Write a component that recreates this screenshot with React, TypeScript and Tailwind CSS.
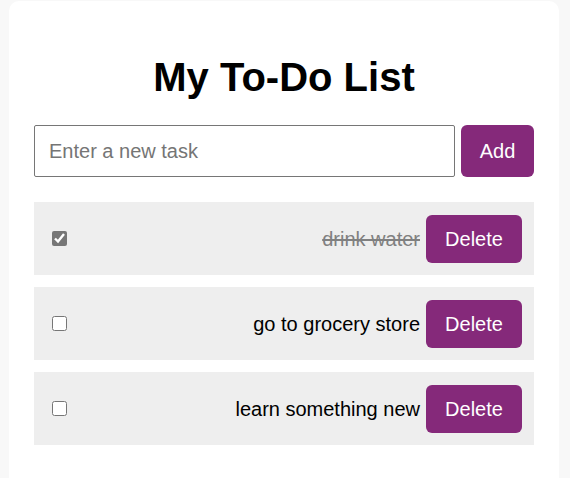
import React, { useState } from "react";

type Task = { id: number; text: string; done: boolean };

export default function App() {
  const [tasks, setTasks] = useState<Task[]>([
    { id: 1, text: "drink water", done: true },
    { id: 2, text: "go to grocery store", done: false },
    { id: 3, text: "learn something new", done: false },
  ]);
  const [value, setValue] = useState("");

  const add = () => {
    if (!value.trim()) return;
    setTasks([...tasks, { id: Date.now(), text: value.trim(), done: false }]);
    setValue("");
  };

  return (
    <div
      className="min-h-[478px] bg-[#f8f8f8] pt-[1px]"
      style={{ fontFamily: '"Liberation Sans", Arial, sans-serif' }}
    >
      <div className="ml-[9px] w-[550px] min-h-[500px] rounded-[10px] bg-white px-[25px] pt-[54px] pb-[25px]">
        <h1 className="text-center text-[40px] font-bold leading-[45px] text-black">
          My To-Do List
        </h1>
        <div className="mt-[25px] flex gap-[6px]">
          <input
            value={value}
            onChange={(e) => setValue(e.target.value)}
            placeholder="Enter a new task"
            className="h-[52px] flex-1 rounded-[2px] border border-[#767676] bg-white px-[14px] text-[20px] text-black outline-none placeholder:text-[#757575]"
          />
          <button
            onClick={add}
            className="h-[52px] w-[73px] rounded-[6px] bg-[#85297a] text-[20px] text-white"
          >
            Add
          </button>
        </div>
        <ul className="mt-[25px] flex flex-col gap-[12px]">
          {tasks.map((t) => (
            <li
              key={t.id}
              className="flex h-[73px] items-center bg-[#eeeeee] pl-[18px] pr-[12px]"
            >
              <input
                type="checkbox"
                checked={t.done}
                onChange={() =>
                  setTasks(
                    tasks.map((x) => (x.id === t.id ? { ...x, done: !x.done } : x))
                  )
                }
                className="m-0 h-[15px] w-[15px] accent-[#767676]"
              />
              <span
                className={
                  "flex-1 text-right text-[20px] " +
                  (t.done ? "text-[#808080] line-through" : "text-black")
                }
              >
                {t.text}
              </span>
              <button
                onClick={() => setTasks(tasks.filter((x) => x.id !== t.id))}
                className="ml-[6px] h-[48px] w-[96px] rounded-[6px] bg-[#85297a] text-[20px] text-white"
              >
                Delete
              </button>
            </li>
          ))}
        </ul>
      </div>
    </div>
  );
}
